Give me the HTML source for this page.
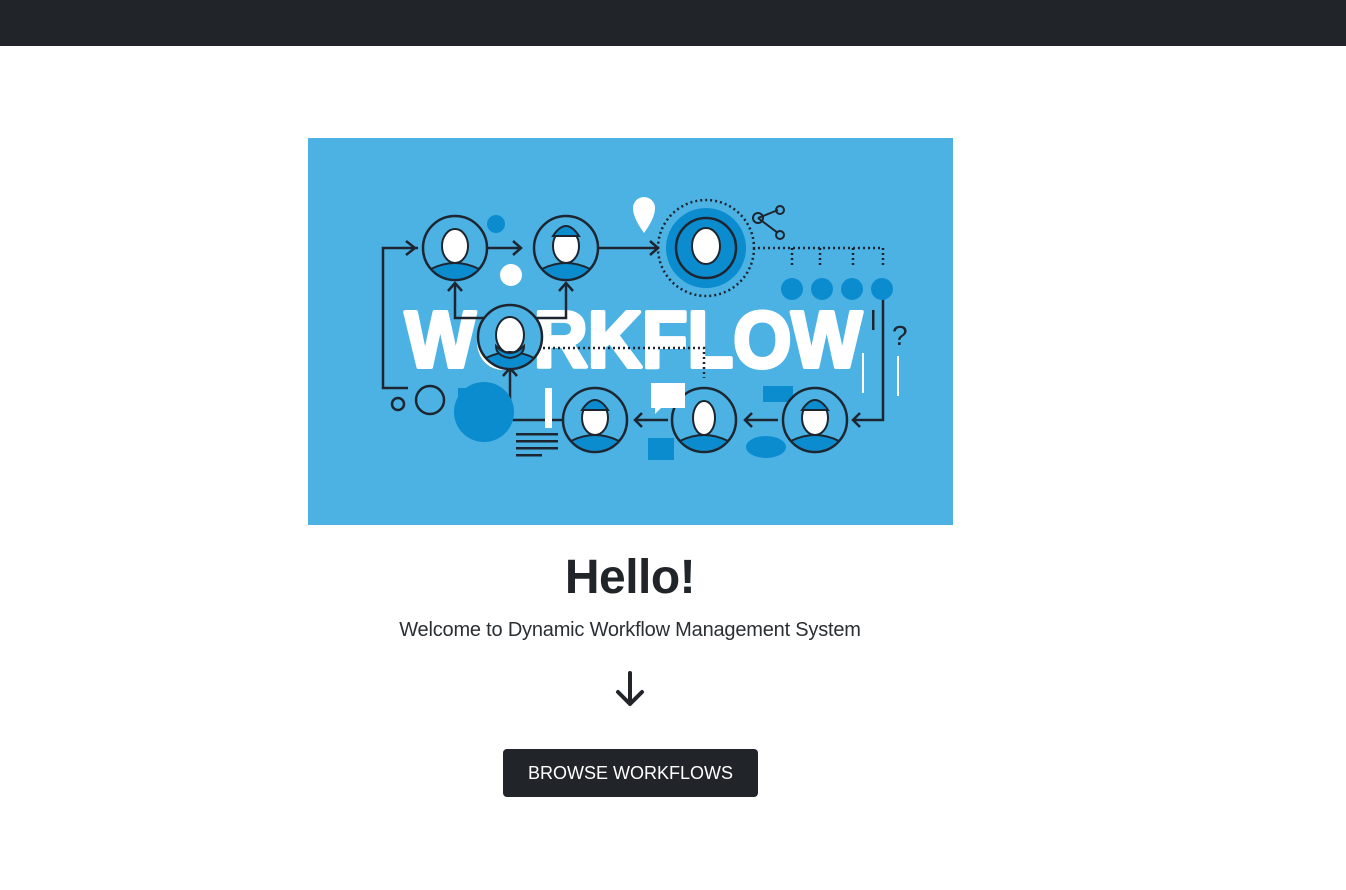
<!DOCTYPE html>
<html><head><meta charset="utf-8"><style>
body{margin:0;background:#fff;font-family:"Liberation Sans",sans-serif;color:#212529;width:1346px;height:890px;overflow:hidden;position:relative}
.nav{position:absolute;left:0;top:0;width:1346px;height:46px;background:#212529}
.ill{position:absolute;left:308px;top:138px;width:645px;height:387px}
h1{position:absolute;left:0;width:1260px;top:548px;margin:0;text-align:center;font-size:48px;font-weight:bold;line-height:60px;letter-spacing:-0.5px}
.sub{position:absolute;left:0;width:1260px;top:617px;text-align:center;font-size:20px;line-height:26px;color:#2a2f33;letter-spacing:-0.2px}
.arr{position:absolute;left:612px;top:670px}
.btn{position:absolute;left:503px;top:749px;width:255px;height:48px;background:#212529;border-radius:4px;color:#fff;font-size:18px;line-height:48px;text-align:center}
</style></head><body>
<div class="nav"></div>
<svg class="ill" viewBox="0 0 645 387" xmlns="http://www.w3.org/2000/svg">
<rect width="645" height="387" fill="#4bb2e3"/>
<text x="97" y="229" font-family="Liberation Sans" font-weight="bold" font-size="80" fill="#fff" stroke="#fff" stroke-width="4" stroke-linejoin="round" textLength="457" lengthAdjust="spacingAndGlyphs">WORKFLOW</text>
<g fill="none" stroke="#1d2630" stroke-width="2.5">
<path d="M110 110 H75 V250 H100"/><path d="M98 103 L107 110 L98 117"/>
<path d="M180 110 H213"/><path d="M205 103 L213 110 L205 117"/>
<path d="M290 110 H350"/><path d="M342 103 L350 110 L342 117"/>
<path d="M147 145 V180 H258 V145"/><path d="M140 153 L147 145 L154 153"/><path d="M251 153 L258 145 L265 153"/>
<path d="M202 230 V282 H258"/><path d="M195 238 L202 230 L209 238"/>
<path d="M327 282 H360"/><path d="M334 275 L327 282 L334 289"/>
<path d="M437 282 H470"/><path d="M444 275 L437 282 L444 289"/>
<path d="M575 150 V282 H545"/><path d="M552 275 L545 282 L552 289"/>
</g>
<g fill="none" stroke="#1d2630" stroke-width="2.5" stroke-dasharray="2 3">
<path d="M450 110 H575"/><path d="M484 110 V128"/><path d="M512 110 V128"/><path d="M545 110 V128"/><path d="M575 110 V128"/>
<path d="M235 210 H396 V240"/>
<circle cx="398" cy="110" r="48"/>
</g>
<circle cx="398" cy="110" r="40" fill="#0b8ccf"/>
<g fill="#0b8ccf"><circle cx="484" cy="151" r="11"/><circle cx="514" cy="151" r="11"/><circle cx="544" cy="151" r="11"/><circle cx="574" cy="151" r="11"/><circle cx="188" cy="86" r="9"/>
<circle cx="176" cy="274" r="30"/><rect x="150" y="250" width="12" height="12"/><path d="M340 300 h26 v22 h-26z"/><path d="M455 248 h30 v16 h-30z"/><ellipse cx="458" cy="309" rx="20" ry="11"/></g>
<g fill="#4bb2e3" stroke="#1d2630" stroke-width="2.5">
<circle cx="147" cy="110" r="32"/><circle cx="258" cy="110" r="32"/><circle cx="398" cy="110" r="30" fill="#0b8ccf"/>
<circle cx="202" cy="199" r="32"/><circle cx="287" cy="282" r="32"/><circle cx="396" cy="282" r="32"/><circle cx="507" cy="282" r="32"/>
</g>
<g fill="#fff" stroke="#1d2630" stroke-width="2"><ellipse cx="147" cy="108" rx="13" ry="17"/><ellipse cx="258" cy="108" rx="13" ry="17"/><ellipse cx="398" cy="108" rx="14" ry="18"/><ellipse cx="202" cy="197" rx="14" ry="18"/><ellipse cx="287" cy="280" rx="13" ry="17"/><ellipse cx="396" cy="280" rx="11" ry="17"/><ellipse cx="507" cy="280" rx="13" ry="17"/></g>
<g fill="#0b8ccf" stroke="#1d2630" stroke-width="2"><path d="M123 131 q24-12 48 0 a32 32 0 0 1-48 0z"/><path d="M234 131 q24-12 48 0 a32 32 0 0 1-48 0z"/><path d="M178 220 q24-12 48 0 a32 32 0 0 1-48 0z"/><path d="M263 303 q24-12 48 0 a32 32 0 0 1-48 0z"/><path d="M372 303 q24-12 48 0 a32 32 0 0 1-48 0z"/><path d="M483 303 q24-12 48 0 a32 32 0 0 1-48 0z"/><path d="M245 98 q13-20 26 0z"/><path d="M494 272 q13-20 26 0z"/><path d="M274 272 q13-20 26 0z"/><path d="M188 208 q14 14 28 0 q0 10-14 12 q-14-2-14-12z"/></g>
<g fill="#fff"><path d="M325 70 a11 11 0 0 1 22 0 q0 10-11 25 q-11-15-11-25z"/><circle cx="203" cy="137" r="11"/><path d="M343 245 h34 v25 h-24 l-6 6 v-6 h-4z"/><rect x="237" y="250" width="7" height="40"/><path d="M555 215 v40 M590 218 v40" stroke="#fff" stroke-width="2"/></g>
<g fill="#1d2630"><circle cx="122" cy="262" r="14" fill="none" stroke="#1d2630" stroke-width="2.5"/><circle cx="90" cy="266" r="6" fill="none" stroke="#1d2630" stroke-width="2.5"/><path d="M208 295h42v2.5h-42zM208 302h42v2.5h-42zM208 309h42v2.5h-42zM208 316h26v2.5h-26z"/><text x="584" y="207" font-size="28" font-family="Liberation Sans">?</text><rect x="564" y="172" width="2.5" height="20"/></g>
<g fill="none" stroke="#1d2630" stroke-width="2"><path d="M450 80 L470 72 M450 80 L470 95"/><circle cx="450" cy="80" r="5"/><circle cx="472" cy="72" r="4"/><circle cx="472" cy="97" r="4"/></g>
</svg>
<h1>Hello!</h1>
<div class="sub">Welcome to Dynamic Workflow Management System</div>
<svg class="arr" width="36" height="40" viewBox="0 0 36 40"><path d="M18 3 V34 M6 22 L18 34 L30 22" fill="none" stroke="#212529" stroke-width="4" stroke-linecap="round" stroke-linejoin="round"/></svg>
<div class="btn">BROWSE WORKFLOWS</div>
</body></html>
